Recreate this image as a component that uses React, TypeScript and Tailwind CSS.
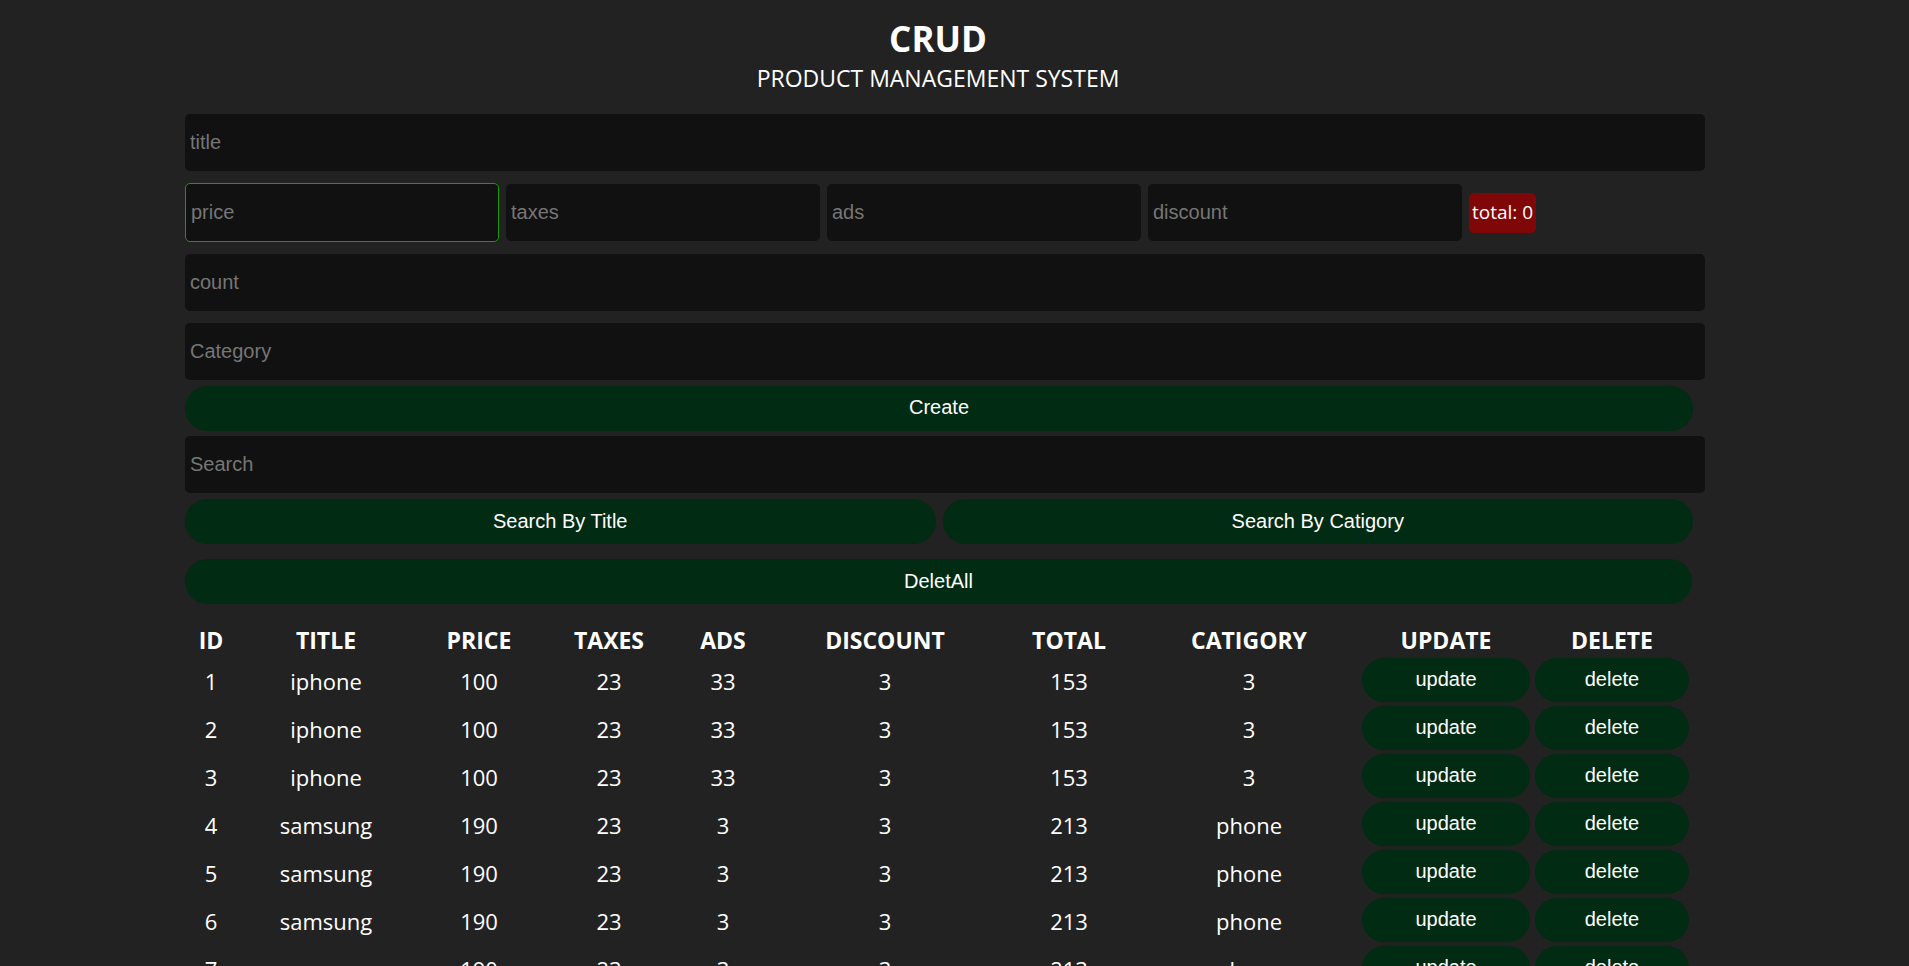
import { useState } from 'react'

type Product = {
  id: number
  title: string
  price: number
  taxes: number
  ads: number
  discount: number
  total: number
  category: string
}

const products: Product[] = [
  { id: 1, title: 'iphone', price: 100, taxes: 23, ads: 33, discount: 3, total: 153, category: '3' },
  { id: 2, title: 'iphone', price: 100, taxes: 23, ads: 33, discount: 3, total: 153, category: '3' },
  { id: 3, title: 'iphone', price: 100, taxes: 23, ads: 33, discount: 3, total: 153, category: '3' },
  { id: 4, title: 'samsung', price: 190, taxes: 23, ads: 3, discount: 3, total: 213, category: 'phone' },
  { id: 5, title: 'samsung', price: 190, taxes: 23, ads: 3, discount: 3, total: 213, category: 'phone' },
  { id: 6, title: 'samsung', price: 190, taxes: 23, ads: 3, discount: 3, total: 213, category: 'phone' },
  { id: 7, title: 'samsung', price: 190, taxes: 23, ads: 3, discount: 3, total: 213, category: 'phone' },
  { id: 8, title: 'samsung', price: 190, taxes: 23, ads: 3, discount: 3, total: 213, category: 'phone' },
]

const inputClass =
  'w-full rounded-[5px] bg-[#111111] px-[5px] text-[20px] text-white outline-none placeholder:text-[#767676] font-["Liberation_Sans",Arial,sans-serif]'

const buttonClass =
  'rounded-full bg-[#012b12] text-[20px] text-white font-["Liberation_Sans",Arial,sans-serif]'

export default function App() {
  const [title, setTitle] = useState('')

  return (
    <main className="min-h-screen bg-[#222222] pb-10 text-white font-['Open_Sans',sans-serif]">
      <div className="ml-[185px] w-[1520px]">
        <header className="w-[1506px] pt-[17px] text-center">
          <h2 className="text-[35px] font-bold leading-[44px]">CRUD</h2>
          <p className="mt-[2px] text-[23px] leading-[30px]">PRODUCT MANAGEMENT SYSTEM</p>
        </header>

        <div className="mt-[21px] flex flex-col">
          <input
            className={`${inputClass} h-[57px]`}
            placeholder="title"
            value={title}
            onChange={(event) => setTitle(event.target.value)}
          />

          <div className="mt-[12px] flex h-[59px] items-center gap-[7px]">
            <input
              className={`${inputClass} h-[59px] !w-[314px] border border-[#1a9a0a]`}
              placeholder="price"
            />
            <input className={`${inputClass} h-[57px] !w-[314px]`} placeholder="taxes" />
            <input className={`${inputClass} h-[57px] !w-[314px]`} placeholder="ads" />
            <input className={`${inputClass} h-[57px] !w-[314px]`} placeholder="discount" />
            <span className="flex h-[40px] items-center rounded-[5px] bg-[#7f0707] px-[3px] text-[19px]">
              total: 0
            </span>
          </div>

          <input className={`${inputClass} mt-[12px] h-[57px]`} placeholder="count" />
          <input className={`${inputClass} mt-[12px] h-[57px]`} placeholder="Category" />

          <button className={`${buttonClass} mt-[6px] h-[45px] w-[1508px] pb-[3px]`}>Create</button>

          <input className={`${inputClass} mt-[5px] h-[57px]`} placeholder="Search" />

          <div className="mt-[6px] flex w-[1508px] gap-[7px]">
            <button className={`${buttonClass} h-[45px] flex-1 pb-[2px]`}>Search By Title</button>
            <button className={`${buttonClass} h-[45px] flex-1 pb-[2px]`}>Search By Catigory</button>
          </div>

          <button className={`${buttonClass} mt-[15px] h-[45px] w-[1507px] pb-[2px]`}>DeletAll</button>
        </div>

        <table className="mt-[19px] w-[1506px] table-fixed border-collapse text-center text-[22px]">
          <colgroup>
            <col className="w-[52px]" />
            <col className="w-[178px]" />
            <col className="w-[128px]" />
            <col className="w-[132px]" />
            <col className="w-[96px]" />
            <col className="w-[228px]" />
            <col className="w-[140px]" />
            <col className="w-[220px]" />
            <col className="w-[174px]" />
            <col className="w-[158px]" />
          </colgroup>
          <thead>
            <tr className="h-[34px] text-[23px] font-bold">
              <th className="p-0">ID</th>
              <th className="p-0">TITLE</th>
              <th className="p-0">PRICE</th>
              <th className="p-0">TAXES</th>
              <th className="p-0">ADS</th>
              <th className="p-0">DISCOUNT</th>
              <th className="p-0">TOTAL</th>
              <th className="p-0">CATIGORY</th>
              <th className="p-0">UPDATE</th>
              <th className="p-0">DELETE</th>
            </tr>
          </thead>
          <tbody>
            {products.map((product) => (
              <tr key={product.id} className="h-[48px]">
                <td className="p-0">{product.id}</td>
                <td className="p-0">{product.title}</td>
                <td className="p-0">{product.price}</td>
                <td className="p-0">{product.taxes}</td>
                <td className="p-0">{product.ads}</td>
                <td className="p-0">{product.discount}</td>
                <td className="p-0">{product.total}</td>
                <td className="p-0">{product.category}</td>
                <td className="px-[3px] pt-0 pb-[4px]">
                  <button className={`${buttonClass} block h-[44px] w-full pb-[2px]`}>update</button>
                </td>
                <td className="px-[2px] pt-0 pb-[4px]">
                  <button className={`${buttonClass} block h-[44px] w-full pb-[2px]`}>delete</button>
                </td>
              </tr>
            ))}
          </tbody>
        </table>
      </div>
    </main>
  )
}
